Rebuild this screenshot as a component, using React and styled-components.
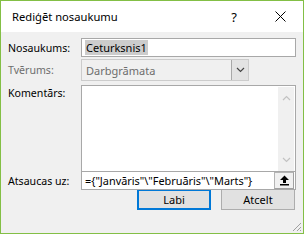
import React from 'react'
import styled, { createGlobalStyle } from 'styled-components'

const Global = createGlobalStyle`
  html, body { margin: 0; padding: 0; background: #ffffff; }
  body { font-family: "Noto Sans", "Liberation Sans", sans-serif; font-size: 10.6px; color: #000; }
  * { box-sizing: border-box; }
`

const Window = styled.div`
  width: 304px;
  height: 234px;
  border: 1px solid #83bf45;
  display: flex;
  flex-direction: column;
  background: #f0f0f0;
  position: relative;
`

const TitleBar = styled.div`
  height: 31px;
  background: #ffffff;
  display: flex;
  align-items: center;
  padding-left: 11px;
  font-size: 11.2px;
`

const Title = styled.div`
  flex: 1;
`

const TitleButton = styled.div`
  width: ${p => p.w}px;
  display: flex;
  justify-content: center;
  align-items: center;
  height: 100%;
  font-size: 13px;
  color: #000;
`

const Body = styled.div`
  flex: 1;
  display: grid;
  grid-template-columns: 73px 215px;
  grid-template-rows: 19px 22px 88px 19px 21px;
  padding: 6px 0 0 7px;
  align-content: start;
`

const Label = styled.div`
  color: ${p => (p.disabled ? '#6d6d6d' : '#000')};
  display: flex;
  align-items: ${p => (p.top ? 'flex-start' : 'center')};
  padding-top: ${p => (p.top ? 1 : 0)}px;
  margin-top: ${p => p.mt || 0}px;
  height: ${p => p.h}px;
`

const Field = styled.div`
  margin-top: ${p => p.mt || 0}px;
  height: ${p => p.h}px;
  width: ${p => p.w || 215}px;
  border: 1px solid ${p => p.border || '#a8a8a8'};
  background: ${p => p.bg || '#ffffff'};
  display: flex;
  align-items: center;
  padding-left: ${p => (p.pad == null ? 3 : p.pad)}px;
  position: relative;
  overflow: hidden;
  white-space: nowrap;
`

const Selected = styled.span`
  background: #cccccc;
  padding: 0 1px;
  font-size: 11px;
`

const GreyText = styled.span`
  color: #6d6d6d;
  flex: 1;
  font-size: 11px;
`

const DropButton = styled.div`
  width: 18px;
  height: 22px;
  margin: -1px -1px -1px 0;
  border: 1px solid #a8a8a8;
  background: #e3e3e3;
  display: flex;
  align-items: center;
  justify-content: center;
`

const Scroll = styled.div`
  position: absolute;
  right: 1px;
  top: 1px;
  bottom: 1px;
  width: 16px;
  background: #f0f0f0;
  display: flex;
  flex-direction: column;
  justify-content: space-between;
  align-items: center;
  padding: 8px 0;
`

const RefText = styled.span`
  flex: 1;
  font-size: 10.9px;
`

const PickButton = styled.div`
  width: 20px;
  height: 17px;
  border: 1px solid #b4b4b4;
  border-right-color: #a0a0a0;
  border-bottom-color: #a0a0a0;
  background: #f0f0f0;
  display: flex;
  align-items: center;
  justify-content: center;
  margin-right: 1px;
`

const ButtonRow = styled.div`
  grid-column: 1 / 3;
  display: flex;
  justify-content: flex-end;
  gap: 10px;
  margin-top: 3px;
  padding-right: 1px;
`

const Button = styled.div`
  width: 74px;
  height: 21px;
  background: #e1e1e1;
  border: ${p => (p.primary ? '2px solid #0078d7' : '1px solid #adadad')};
  display: flex;
  align-items: center;
  justify-content: center;
  font-size: 11px;
`

const Grip = styled.svg`
  position: absolute;
  right: 1px;
  bottom: 1px;
`

const Chevron = ({ up, color }) => (
  <svg width="9" height="6" viewBox="0 0 9 6">
    <polyline
      points={up ? '1,5 4.5,1.5 8,5' : '1,1 4.5,4.5 8,1'}
      fill="none"
      stroke={color}
      strokeWidth="1.2"
    />
  </svg>
)

export default function App() {
  return (
    <>
      <Global />
      <Window>
        <TitleBar>
          <Title>Rediģēt nosaukumu</Title>
          <TitleButton w={46}>?</TitleButton>
          <TitleButton w={46}>
            <svg width="11" height="11" viewBox="0 0 11 11">
              <path d="M0.5 0.5 L10.5 10.5 M10.5 0.5 L0.5 10.5" stroke="#000" strokeWidth="1" />
            </svg>
          </TitleButton>
        </TitleBar>
        <Body>
          <Label h={19}>Nosaukums:</Label>
          <Field h={19}>
            <Selected>Ceturksnis1</Selected>
          </Field>

          <Label h={22} mt={2} disabled>Tvērums:</Label>
          <Field h={22} mt={2} w={168} bg="#f0f0f0" border="#cccccc" pad={4}>
            <GreyText>Darbgrāmata</GreyText>
            <DropButton>
              <Chevron color="#444" />
            </DropButton>
          </Field>

          <Label h={88} mt={6} top>Komentārs:</Label>
          <Field h={88} mt={6}>
            <Scroll>
              <Chevron up color="#c2c2c2" />
              <Chevron color="#c2c2c2" />
            </Scroll>
          </Field>

          <Label h={19} mt={4}>Atsaucas uz:</Label>
          <Field h={19} mt={4}>
            <RefText>={'{'}"Janvāris"\"Februāris"\"Marts"{'}'}</RefText>
            <PickButton>
              <svg width="11" height="11" viewBox="0 0 11 11">
                <path d="M5.5 0.5 L10 5 L7 5 L7 8 L4 8 L4 5 L1 5 Z" fill="#000" />
                <rect x="1" y="9" width="9" height="1.5" fill="#000" />
              </svg>
            </PickButton>
          </Field>

          <ButtonRow>
            <Button primary>Labi</Button>
            <Button>Atcelt</Button>
          </ButtonRow>
        </Body>
        <Grip width="12" height="12" viewBox="0 0 12 12">
          <path d="M11 3 L3 11 M11 7 L7 11 M11 10 L10 11" stroke="#a0a0a0" strokeWidth="1" />
        </Grip>
      </Window>
    </>
  )
}
